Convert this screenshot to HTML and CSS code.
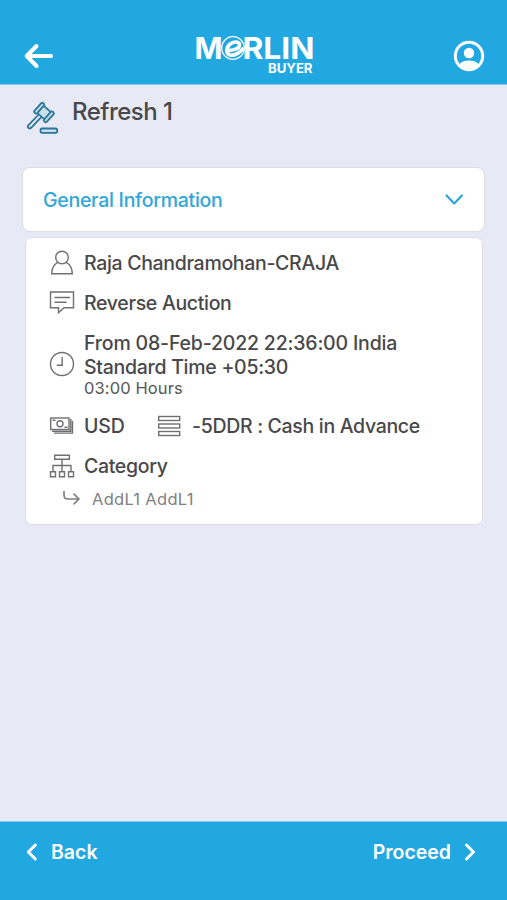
FILE: index.html
```html
<!DOCTYPE html>
<html lang="en">
<head>
<meta charset="utf-8">
<meta name="viewport" content="width=device-width, initial-scale=1">
<title>Merlin Buyer</title>
<link rel="stylesheet" href="styles.css">
</head>
<body>
<header class="topbar">
  <svg class="back-arrow" width="30" height="26" viewBox="0 0 30 26"><path d="M12.5 3 2.7 13l9.8 10M3.500 13h23.600"/></svg>
  <svg class="logo" width="120" height="52" viewBox="0 -4 120 52" role="img" aria-label="Merlin Buyer">
    <text class="logo-main" x="-.5" y="25.500" textLength="28" lengthAdjust="spacingAndGlyphs">M</text>
    <circle cx="38" cy="15" r="11.300"/>
    <path class="logo-e" d="M32 17.200c5 .6 12-1.200 12.500-4.700.4-3.800-5.500-4.900-9.500-1.300-4.500 4-4.300 10.300.9 11 3.600.4 8-2 11.800-6.200"/>
    <text class="logo-main" x="47.500" y="25.500" textLength="72" lengthAdjust="spacingAndGlyphs">RLIN</text>
    <text class="logo-sub" x="73" y="39.500" textLength="44.500" lengthAdjust="spacingAndGlyphs">BUYER</text>
  </svg>
  <svg class="profile" width="32" height="32" viewBox="0 0 32 32"><circle class="ring" cx="16" cy="16" r="13.700"/><circle cx="16" cy="13" r="5.200"/><path d="M6.500 24c2.300-2.500 5.600-3.600 9.500-3.600s7.200 1.100 9.500 3.600C23 27.500 20 29 16 29s-7-1.500-9.500-5z"/></svg>
</header>
<main class="content">
  <div class="title-row">
    <svg class="gavel" width="34" height="34" viewBox="0 0 34 34">
      <g transform="translate(19 10.500) rotate(42)"><rect x="-5" y="-4.800" width="10" height="9.600"/><rect x="-8.300" y="-6.500" width="3.600" height="13" rx="1.600"/><rect x="4.700" y="-6.500" width="3.600" height="13" rx="1.600"/></g>
      <path d="m13.200 13-9.700 10.200c-1.700 2 .6 4.200 2.600 2.600l9.700-10.200"/>
      <rect x="15.500" y="26.500" width="16.700" height="4.300" rx="1.700"/>
    </svg>
    <h1 class="title">Refresh 1</h1>
  </div>
  <section class="accordion">
    <h2 class="accordion-title">General Information</h2>
    <svg width="20" height="14" viewBox="0 0 20 14"><path d="m2.500 2.500 7.700 8 7.700-8"/></svg>
  </section>
  <section class="card">
    <div class="row">
      <svg class="icon" width="26" height="26" viewBox="0 0 26 26"><circle cx="13" cy="7.500" r="6.300"/><path d="M8.800 12.300C5 14.200 2.800 17.500 2.700 23.800h20.600c-.1-6.300-2.300-9.600-6.100-11.500"/></svg>
      <span class="label name">Raja Chandramohan-CRAJA</span>
    </div>
    <div class="row">
      <svg class="icon" width="26" height="26" viewBox="0 0 26 26"><path d="M1.500 2h23v15.700H15L9.500 22.700v-5h-8zM6 7.500h14.500M6 12.200h11"/></svg>
      <span class="label type">Reverse Auction</span>
    </div>
    <div class="row time-row">
      <svg class="icon clock" width="26" height="26" viewBox="0 0 26 26"><circle cx="13" cy="13" r="11.500"/><path d="M13.200 6.500v7.800H8.300"/></svg>
      <div class="time">
        <div class="label from">From 08-Feb-2022 22:36:00 India</div>
        <div class="label zone">Standard Time +05:30</div>
        <div class="duration">03:00 Hours</div>
      </div>
    </div>
    <div class="row">
      <svg class="icon" width="26" height="26" viewBox="0 0 26 26"><rect x="1.700" y="5" width="18.300" height="11.500"/><circle cx="11" cy="10.800" r="3"/><path d="M4 7.300h2M16 14.300h2M3.500 18.300h18.300V6.500M5.500 20.100h18V8.500"/></svg>
      <span class="label currency">USD</span>
      <svg class="icon terms-icon" width="26" height="26" viewBox="0 0 26 26"><rect x="2.700" y="3.500" width="21" height="4"/><rect x="2.700" y="11" width="21" height="4"/><rect x="2.700" y="18.500" width="21" height="4"/></svg>
      <span class="label terms">-5DDR : Cash in Advance</span>
    </div>
    <div class="row">
      <svg class="icon" width="26" height="26" viewBox="0 0 26 26"><path d="M5.700 2.300h14.600v4H5.700zM13 6.300v12.500M4 18.800v-6.300h18v6.300M1.500 18.800h5v5h-5zM10.500 18.800h5v5h-5zM19.500 18.800h5v5h-5z"/></svg>
      <span class="label category">Category</span>
    </div>
    <div class="sub-row">
      <svg width="20" height="16" viewBox="0 0 20 16"><path d="M2 .5V4c0 2.700 1.300 4 4 4h10.500M12 3.200 17 8l-5 4.800"/></svg>
      <span class="sub-label">AddL1 AddL1</span>
    </div>
  </section>
</main>
<footer class="bottombar">
  <div class="nav"><svg width="13" height="20" viewBox="0 0 13 20"><path d="m9.300 3-7 7 7 7"/></svg><span class="back">Back</span></div>
  <div class="nav"><span class="proceed">Proceed</span><svg width="13" height="20" viewBox="0 0 13 20"><path d="m3.500 3 7 7-7 7"/></svg></div>
</footer>
</body>
</html>
```

FILE: styles.css
```css
* { box-sizing: border-box; }
body {
  margin: 0;
  height: 900px;
  display: flex;
  flex-direction: column;
  overflow: hidden;
  background: #e7eaf5;
  font-family: Inter, "Liberation Sans", sans-serif;
  color: #48484a;
}
svg { display: block; flex: none; overflow: visible; fill: none; stroke-linecap: round; stroke-linejoin: round; }
h1, h2 { margin: 0; white-space: nowrap; }
.topbar {
  height: 85px;
  padding: 27px 22px 0 24px;
  display: grid;
  grid-template-columns: 1fr 120px 1fr;
  align-items: center;
  background: #21a8e0;
  border-bottom: 1px solid #83cdee;
}
.back-arrow { stroke: #fff; stroke-width: 4; }
.logo { margin-bottom: 2px; }
.logo circle { stroke: #fff; stroke-width: 1.2; }
.logo .logo-e { stroke: #fff; stroke-width: 3.6; }
.logo text { fill: #fff; font-weight: 700; }
.logo-main { font-size: 30px; }
.logo-sub { font-size: 13px; }
.profile { justify-self: end; fill: #fff; }
.profile .ring { fill: none; stroke: #fff; stroke-width: 3; }
.content { flex: 1; padding: 0 22px; }
.title-row { height: 82px; display: flex; padding: 10px 0 0 3px; }
.gavel { margin-top: 7px; stroke: #2d7597; stroke-width: 1.8; }
.gavel rect { fill: #c9e1ec; }
.title { margin-left: 13px; font-size: 24px; line-height: 34px; font-weight: 500; letter-spacing: -.5px; }
.accordion {
  height: 65px;
  padding: 0 20px;
  display: flex;
  align-items: center;
  justify-content: space-between;
  background: #fff;
  border: 1px solid #dcdde5;
  border-radius: 8px;
}
.accordion-title { font-size: 19.5px; font-weight: 500; color: #30a6d9; letter-spacing: -.28px; }
.accordion svg { stroke: #2ba4dc; stroke-width: 2.2; }
.card {
  height: 288px;
  margin: 5px 2px 0 3px;
  padding: 5px 0 0 23px;
  background: #fff;
  border: 1px solid #dcdde5;
  border-radius: 7px;
}
.row { height: 40px; display: flex; align-items: center; }
.icon { stroke: #707072; stroke-width: 1.4; stroke-linejoin: miter; }
.label { font-size: 19.5px; line-height: 24px; font-weight: 500; white-space: nowrap; letter-spacing: -.32px; }
.row > .label, .time { margin-left: 9px; }
.from { letter-spacing: -.18px; }
.zone { letter-spacing: -.28px; }
.currency { width: 72px; letter-spacing: -.1px; }
.terms { padding-left: 1px; }
.time-row { height: 83px; }
.clock { margin-top: -1px; }
.time { margin-top: -2px; }
.duration { font-size: 16.5px; line-height: 18px; color: #565658; letter-spacing: .1px; }
.sub-row { height: 26px; padding-left: 13px; display: flex; align-items: center; }
.sub-row svg { stroke: #808083; stroke-width: 1.7; }
.sub-label { margin-left: 10px; font-size: 16.5px; color: #808083; letter-spacing: .3px; }
.bottombar {
  height: 79px;
  padding: 20px 31px 0 26px;
  display: flex;
  justify-content: space-between;
  align-items: flex-start;
  background: #21a8e0;
  border-top: 1px solid #83cdee;
  color: #fff;
}
.nav { height: 20px; display: flex; align-items: center; gap: 12px; font-size: 19.5px; font-weight: 600; }
.nav svg { stroke: #fff; stroke-width: 3; }
```
